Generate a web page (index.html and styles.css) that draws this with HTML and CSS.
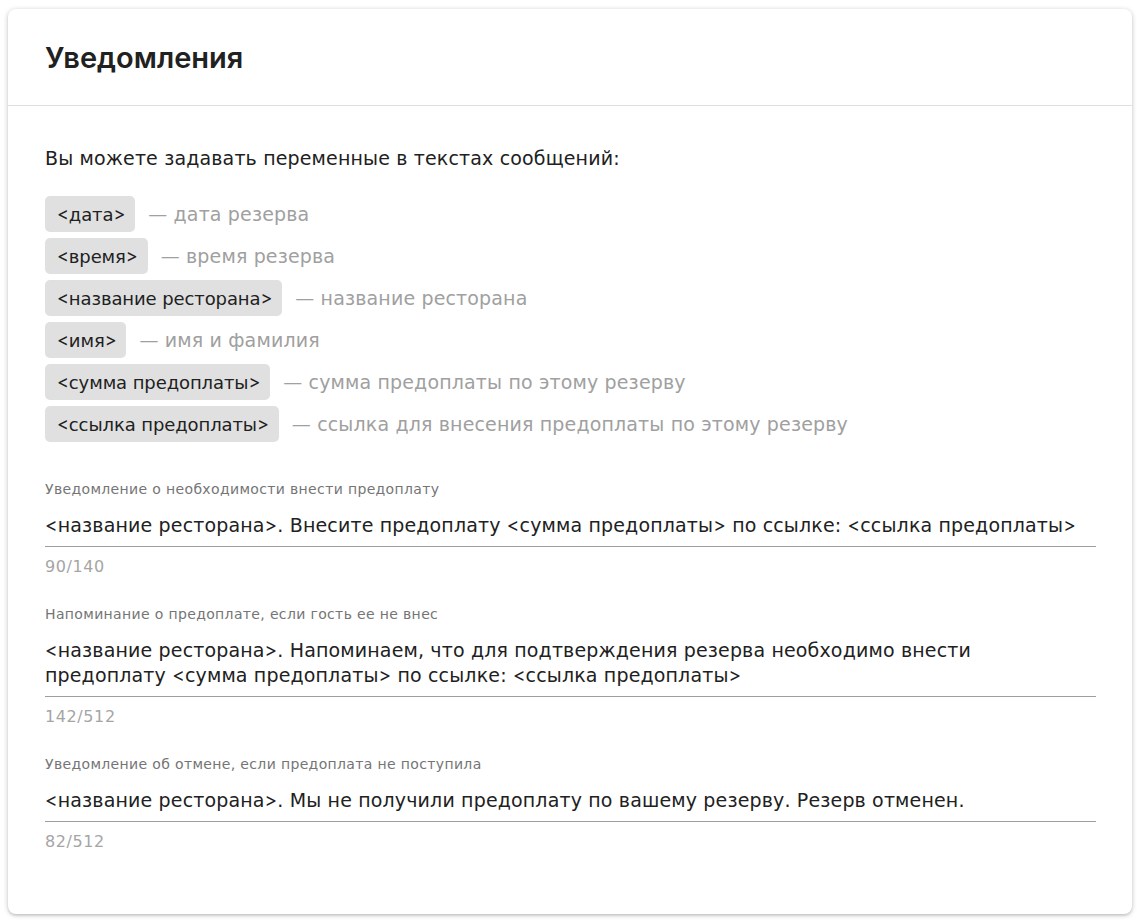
FILE: index.html
```html
<!DOCTYPE html>
<html lang="ru">
<head>
<meta charset="utf-8">
<link rel="stylesheet" href="styles.css">
</head>
<body>
<div class="card">
  <div class="card-header"><h1 class="title">Уведомления</h1></div>
  <div class="card-body">
    <p class="intro">Вы можете задавать переменные в текстах сообщений:</p>
    <ul class="vars">
      <li class="var"><span class="chip"><span class="br">&lt;</span>дата<span class="br">&gt;</span></span><span class="desc">— дата резерва</span></li>
      <li class="var"><span class="chip"><span class="br">&lt;</span>время<span class="br">&gt;</span></span><span class="desc">— время резерва</span></li>
      <li class="var"><span class="chip"><span class="br">&lt;</span>название ресторана<span class="br">&gt;</span></span><span class="desc">— название ресторана</span></li>
      <li class="var"><span class="chip"><span class="br">&lt;</span>имя<span class="br">&gt;</span></span><span class="desc">— имя и фамилия</span></li>
      <li class="var"><span class="chip"><span class="br">&lt;</span>сумма предоплаты<span class="br">&gt;</span></span><span class="desc">— сумма предоплаты по этому резерву</span></li>
      <li class="var"><span class="chip"><span class="br">&lt;</span>ссылка предоплаты<span class="br">&gt;</span></span><span class="desc">— ссылка для внесения предоплаты по этому резерву</span></li>
    </ul>
    <div class="field">
      <div class="label">Уведомление о необходимости внести предоплату</div>
      <div class="value"><span class="br">&lt;</span>название ресторана<span class="br">&gt;</span>. Внесите предоплату <span class="br">&lt;</span>сумма предоплаты<span class="br">&gt;</span> по ссылке: <span class="br">&lt;</span>ссылка предоплаты<span class="br">&gt;</span></div>
      <div class="counter">90/140</div>
    </div>
    <div class="field">
      <div class="label">Напоминание о предоплате, если гость ее не внес</div>
      <div class="value"><span class="br">&lt;</span>название ресторана<span class="br">&gt;</span>. Напоминаем, что для подтверждения резерва необходимо внести <span class="seg">предоплату</span> <span class="br">&lt;</span>сумма предоплаты<span class="br">&gt;</span> по ссылке: <span class="br">&lt;</span>ссылка предоплаты<span class="br">&gt;</span></div>
      <div class="counter">142/512</div>
    </div>
    <div class="field">
      <div class="label">Уведомление об отмене, если предоплата не поступила</div>
      <div class="value"><span class="br">&lt;</span>название ресторана<span class="br">&gt;</span>. Мы не получили предоплату по вашему резерву. Резерв отменен.</div>
      <div class="counter">82/512</div>
    </div>
  </div>
</div>
</body>
</html>
```
FILE: styles.css
```css
* { box-sizing: border-box; }
html, body { margin: 0; padding: 0; background: #fff; }
body {
  padding: 9px 5px 7px 8px;
  font-family: "DejaVu Sans", "Noto Sans", sans-serif;
  color: #212121;
}
.card {
  background: #fff;
  border-radius: 8px;
  box-shadow: 0 1px 5px rgba(0,0,0,0.24), 0 2px 2px rgba(0,0,0,0.07);
}
.card-header {
  height: 97px;
  display: flex;
  align-items: center;
  padding: 0 37px;
  border-bottom: 1px solid #e0e0e0;
}
.title {
  margin: 0;
  font-family: "Inter", "DejaVu Sans", sans-serif;
  font-size: 29px;
  font-weight: 600;
  color: #212121;
}
.card-body {
  padding: 40px 36px 34px 37px;
}
.intro {
  margin: 0 0 26px;
  font-size: 19px;
  line-height: 24px;
  letter-spacing: 0.15px;
}
.br {
  display: inline-block;
  line-height: 20px;
  font-family: "Inter", "DejaVu Sans", sans-serif;
}
.seg { display: inline-block; }
.vars {
  list-style: none;
  margin: 0 0 38px;
  padding: 0;
  display: flex;
  flex-direction: column;
  gap: 6px;
}
.var {
  display: flex;
  align-items: center;
  gap: 13px;
  font-size: 19px;
  letter-spacing: 0.15px;
}
.chip {
  background: #e0e0e0;
  border-radius: 5px;
  height: 36px;
  padding: 0 10px 0 12px;
  display: inline-flex;
  align-items: center;
  white-space: pre;
  font-size: 18px;
  letter-spacing: -0.1px;
}
.desc { color: #a0a0a0; }
.field { margin-bottom: 26px; }
.label {
  font-size: 14px;
  letter-spacing: 0.35px;
  color: #757575;
  line-height: 18px;
  margin-bottom: 15px;
}
.value {
  font-size: 19px;
  letter-spacing: 0.15px;
  line-height: 25px;
  padding-bottom: 8px;
  border-bottom: 1px solid #9e9e9e;
}
.counter {
  font-size: 16px;
  letter-spacing: 0.6px;
  color: #a5a5a5;
  margin-top: 8px;
  line-height: 24px;
}
```
